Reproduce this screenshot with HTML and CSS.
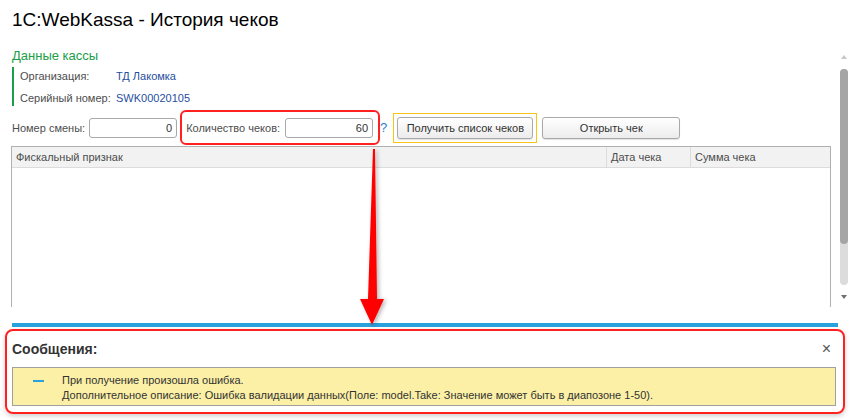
FILE: index.html
```html
<!DOCTYPE html>
<html lang="ru">
<head>
    <meta charset="UTF-8">
    <title>1C:WebKassa - История чеков</title>
    <link rel="stylesheet" href="styles.css">
</head>
<body>

    <div class="page">
        <h1 class="title">1C:WebKassa - История чеков</h1>

        <div class="main">
            <div class="content">
                <div class="group-title">Данные кассы</div>
                <div class="group">
                    <div class="field-row">
                        <span class="label">Организация:</span>
                        <span class="value">ТД Лакомка</span>
                    </div>
                    <div class="field-row">
                        <span class="label">Серийный номер:</span>
                        <span class="value">SWK00020105</span>
                    </div>
                </div>

                <div class="toolbar">
                    <span class="tlabel">Номер смены:</span>
                    <div class="input">0</div>
                    <div class="highlight">
                        <span class="tlabel">Количество чеков:</span>
                        <div class="input">60</div>
                    </div>
                    <span class="help">?</span>
                    <div class="default-frame">
                        <button class="btn btn-wide">Получить список чеков</button>
                    </div>
                    <button class="btn btn-open">Открыть чек</button>
                </div>

                <div class="grid">
                    <div class="grid-head">
                        <div class="col col-fiscal">Фискальный признак</div>
                        <div class="col col-date">Дата чека</div>
                        <div class="col col-sum">Сумма чека</div>
                    </div>
                    <div class="grid-body"></div>
                </div>
            </div>

            <div class="scrollbar">
                <div class="arrow-up"></div>
                <div class="track">
                    <div class="thumb"></div>
                </div>
                <div class="arrow-down"></div>
            </div>
        </div>

        <div class="splitter"></div>

        <div class="messages">
            <div class="messages-head">
                <span class="messages-title">Сообщения:</span>
                <span class="close">×</span>
            </div>
            <div class="message">
                <span class="dash"></span>
                <div class="message-text">
                    <div>При получение произошла ошибка.</div>
                    <div>Дополнительное описание: Ошибка валидации данных(Поле: model.Take: Значение может быть в диапозоне 1-50).</div>
                </div>
            </div>
        </div>

        <svg class="pointer" width="40" height="182" viewBox="0 0 40 182">
            <defs>
                <filter id="sh" x="-50%" y="-10%" width="200%" height="120%">
                    <feDropShadow dx="2" dy="1" stdDeviation="2" flood-color="#000" flood-opacity="0.3"/>
                </filter>
            </defs>
            <polygon points="20,2 22,2 24,152 31,152 19,178 7,152 15,152" fill="#ff0000" filter="url(#sh)"/>
        </svg>
    </div>

</body>
</html>
```

FILE: styles.css
```css
body {
    margin: 0;
    background-color: #fff;
    font-family: 'Liberation Sans', Arial, sans-serif;
    font-size: 11px;
    color: #4d4d4d;
}

.page {
    position: relative;
    width: 850px;
    height: 420px;
    overflow: hidden;
}

.title {
    margin: 0;
    padding: 8px 0 0 12px;
    height: 30px;
    font-size: 19px;
    font-weight: normal;
    line-height: 24px;
    color: #000;
}

.main {
    display: flex;
    height: 276px;
}

.content {
    width: 828px;
    padding-left: 11px;
}

.group-title {
    margin-top: 10px;
    padding-left: 1px;
    font-size: 13px;
    line-height: 16px;
    color: #1a9e47;
}

.group {
    display: flex;
    flex-direction: column;
    gap: 6px;
    margin-top: 3px;
    margin-left: 1px;
    border-left: 2px solid #1a9e47;
    padding: 1px 0 0 6px;
}

.field-row {
    display: flex;
    height: 16px;
    align-items: center;
    white-space: nowrap;
}

.label {
    width: 96px;
    color: #4d4d4d;
}

.value {
    color: #1f4fa0;
}

.toolbar {
    display: flex;
    align-items: center;
    height: 35px;
    margin-top: 4px;
    padding-left: 1px;
    white-space: nowrap;
}

.tlabel {
    margin-right: 4px;
}

.input {
    width: 82px;
    height: 18px;
    padding-right: 4px;
    border: 1px solid #a9a9a9;
    border-radius: 3px;
    text-align: right;
    line-height: 18px;
    color: #333;
}

.highlight {
    display: flex;
    align-items: center;
    height: 31px;
    margin-left: 3px;
    padding: 0 5px 0 4px;
    border: 2px solid #ff2020;
    border-radius: 6px;
}

.highlight .tlabel {
    margin-right: 5px;
}

.help {
    margin-left: 0;
    color: #2a7fd4;
    font-size: 13px;
}

.default-frame {
    margin-left: 6px;
    padding: 3px;
    border: 1px solid #f5c518;
}

.btn {
    height: 22px;
    border: 1px solid #a9a9a9;
    border-radius: 3px;
    background: linear-gradient(#ffffff, #ececec);
    font-family: 'Liberation Sans', Arial, sans-serif;
    font-size: 11px;
    color: #333;
    padding: 0;
    box-shadow: 0 1px 1px rgba(0, 0, 0, 0.12);
}

.btn-wide {
    width: 136px;
}

.btn-open {
    width: 138px;
    margin-left: 5px;
}

.grid {
    width: 818px;
    margin-top: 1px;
    border-left: 1px solid #b0b0b0;
    border-right: 1px solid #b0b0b0;
}

.grid-head {
    display: flex;
    height: 20px;
    border-top: 1px solid #b0b0b0;
    border-bottom: 1px solid #dcdcdc;
    background-color: #f2f2f2;
    line-height: 20px;
}

.col {
    padding-left: 4px;
    color: #4d4d4d;
}

.col-fiscal {
    width: 590px;
}

.col-date {
    width: 79px;
    border-left: 1px solid #dcdcdc;
}

.col-sum {
    flex: 1;
    border-left: 1px solid #dcdcdc;
}

.grid-body {
    height: 139px;
}

.scrollbar {
    display: flex;
    flex-direction: column;
    align-items: center;
    width: 12px;
    padding-top: 17px;
}

.arrow-up {
    width: 0;
    height: 0;
    border-left: 3px solid transparent;
    border-right: 3px solid transparent;
    border-bottom: 4px solid #c8c8c8;
}

.track {
    width: 8px;
    height: 216px;
    margin-top: 10px;
    border-radius: 4px;
    background-color: #dcdcdc;
}

.thumb {
    height: 175px;
    border-radius: 4px;
    background-color: #a5a5a5;
}

.arrow-down {
    width: 0;
    height: 0;
    margin-top: 10px;
    border-left: 3px solid transparent;
    border-right: 3px solid transparent;
    border-top: 4px solid #707070;
}

.splitter {
    width: 826px;
    height: 4px;
    margin: 9px 0 0 12px;
    background-color: #29a1dc;
}

.messages {
    width: 836px;
    height: 81px;
    margin: 2px 0 0 5px;
    border: 2px solid #ff2020;
    border-radius: 8px;
    box-shadow: 0 2px 5px rgba(0, 0, 0, 0.2);
}

.messages-head {
    display: flex;
    justify-content: space-between;
    align-items: center;
    height: 36px;
    padding: 0 12px 0 5px;
}

.messages-title {
    font-size: 14px;
    font-weight: bold;
    color: #333;
}

.close {
    font-size: 16px;
    color: #555;
}

.message {
    display: flex;
    align-items: center;
    box-sizing: border-box;
    width: 824px;
    height: 39px;
    padding-top: 3px;
    margin-left: 5px;
    border: 1px solid #a0a0a0;
    background-color: #fbf0a6;
}

.dash {
    width: 11px;
    height: 2px;
    margin: 0 18px 14px 20px;
    background-color: #29a1dc;
}

.message-text {
    line-height: 15px;
    color: #333;
}

.pointer {
    position: absolute;
    left: 353px;
    top: 147px;
}
```
